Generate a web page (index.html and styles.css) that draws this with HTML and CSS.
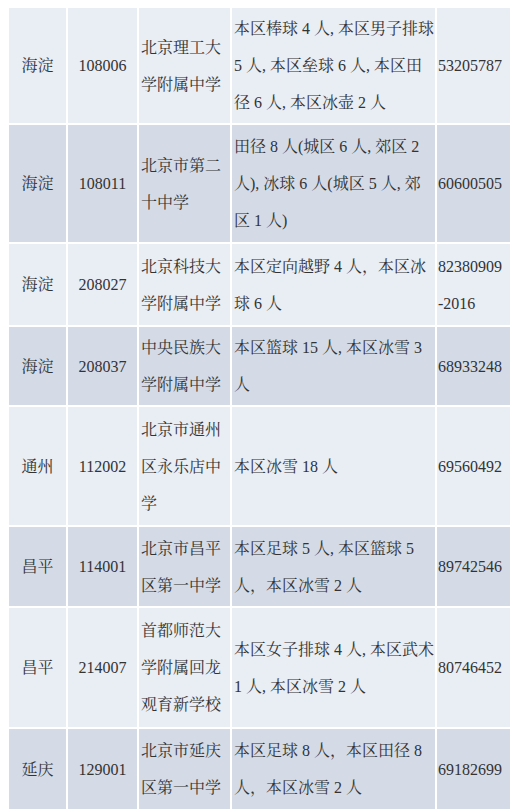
FILE: index.html
```html
<!DOCTYPE html>
<html lang="zh-CN">
<head>
<meta charset="utf-8">
<link rel="stylesheet" href="styles.css">
</head>
<body>
<table class="schools">
  <colgroup>
    <col class="c-dist"><col class="c-code"><col class="c-name"><col class="c-sport"><col class="c-tel">
  </colgroup>
  <tbody>
    <tr class="light h115">
      <td class="ctr">海淀</td><td class="ctr num">108006</td>
      <td>北京理工大<br>学附属中学</td>
      <td>本区棒球 4 人, 本区男子排球<br>5 人, 本区垒球 6 人, 本区田<br>径 6 人, 本区冰壶 2 人</td>
      <td class="num">53205787</td>
    </tr>
    <tr class="dark h117">
      <td class="ctr">海淀</td><td class="ctr num">108011</td>
      <td>北京市第二<br>十中学</td>
      <td>田径 8 人(城区 6 人, 郊区 2<br>人), 冰球 6 人(城区 5 人, 郊<br>区 1 人)</td>
      <td class="num">60600505</td>
    </tr>
    <tr class="light h81">
      <td class="ctr">海淀</td><td class="ctr num">208027</td>
      <td>北京科技大<br>学附属中学</td>
      <td>本区定向越野 4 人，本区冰<br>球 6 人</td>
      <td class="num">82380909<br>-2016</td>
    </tr>
    <tr class="dark h78">
      <td class="ctr">海淀</td><td class="ctr num">208037</td>
      <td>中央民族大<br>学附属中学</td>
      <td>本区篮球 15 人, 本区冰雪 3<br>人</td>
      <td class="num">68933248</td>
    </tr>
    <tr class="light h118">
      <td class="ctr">通州</td><td class="ctr num">112002</td>
      <td>北京市通州<br>区永乐店中<br>学</td>
      <td>本区冰雪 18 人</td>
      <td class="num">69560492</td>
    </tr>
    <tr class="dark h79">
      <td class="ctr">昌平</td><td class="ctr num">114001</td>
      <td>北京市昌平<br>区第一中学</td>
      <td>本区足球 5 人, 本区篮球 5<br>人，本区冰雪 2 人</td>
      <td class="num">89742546</td>
    </tr>
    <tr class="light h119">
      <td class="ctr">昌平</td><td class="ctr num">214007</td>
      <td>首都师范大<br>学附属回龙<br>观育新学校</td>
      <td>本区女子排球 4 人, 本区武术<br>1 人, 本区冰雪 2 人</td>
      <td class="num">80746452</td>
    </tr>
    <tr class="dark h80">
      <td class="ctr">延庆</td><td class="ctr num">129001</td>
      <td>北京市延庆<br>区第一中学</td>
      <td>本区足球 8 人，本区田径 8<br>人，本区冰雪 2 人</td>
      <td class="num">69182699</td>
    </tr>
  </tbody>
</table>
</body>
</html>
```
FILE: styles.css
```css
html, body {
  margin: 0;
  padding: 0;
  background: #ffffff;
}

.schools {
  margin: 6px 0 0 7px;
  border-collapse: separate;
  border-spacing: 2px;
  table-layout: fixed;
  width: 505px;
  font-family: "Liberation Serif", "Noto Serif CJK SC", "Noto Sans CJK SC", serif;
  font-size: 16px;
  line-height: 37px;
  color: #333333;
}

.c-dist { width: 57px; }
.c-code { width: 69px; }
.c-name { width: 91px; }
.c-sport { width: 203px; }
.c-tel { width: 73px; }

.schools td {
  padding: 0 0 0 2px;
  vertical-align: middle;
  text-align: left;
  white-space: nowrap;
  overflow: hidden;
}

.schools td.num { padding-left: 1px; }
.schools td.ctr { text-align: center; padding: 0; }

.light td { background: #e9edf4; }
.dark td { background: #d4dbe7; }

.h115 { height: 115px; }
.h117 { height: 117px; }
.h81 { height: 81px; }
.h78 { height: 78px; }
.h118 { height: 118px; }
.h79 { height: 79px; }
.h119 { height: 119px; }
.h80 { height: 80px; }
```
